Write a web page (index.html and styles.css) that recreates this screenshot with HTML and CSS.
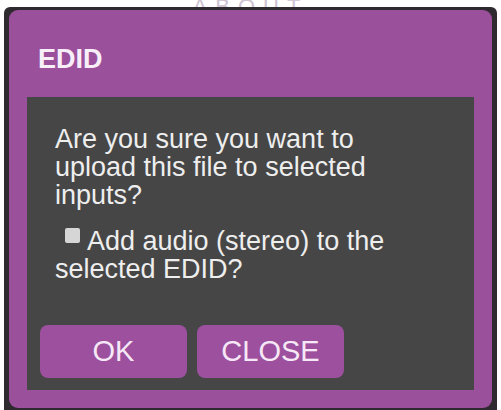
FILE: index.html
```html
<!DOCTYPE html>
<html lang="en">
<head>
    <meta charset="UTF-8">
    <title>EDID</title>
    <link rel="stylesheet" href="styles.css">
</head>
<body>
    <div class="page-title"><span>ABOUT</span></div>
    <div class="frame">
        <div class="dialog">
            <h2 class="dialog-title">EDID</h2>
            <div class="dialog-body">
                <p class="question">Are you sure you want to upload this file to selected inputs?</p>
                <label class="option">
                    <span class="check"></span>Add audio (stereo) to the selected EDID?
                </label>
                <div class="actions">
                    <button type="button" class="btn">OK</button>
                    <button type="button" class="btn">CLOSE</button>
                </div>
            </div>
        </div>
    </div>
</body>
</html>
```

FILE: styles.css
```css
body {
    margin: 0;
    padding: 0;
    background-color: #ffffff;
    font-family: "Liberation Sans", Arial, sans-serif;
    overflow: hidden;
}

.page-title {
    height: 7px;
    overflow: hidden;
    text-align: center;
}

.page-title span {
    display: inline-block;
    margin-top: -15px;
    font-size: 22px;
    letter-spacing: 8px;
    color: #cdc3d3;
}

.frame {
    margin: 0 4px;
    padding: 3px 5px 0 5px;
    background-color: #2f2a30;
    border-radius: 6px 6px 0 0;
    height: 410px;
}

.dialog {
    background-color: #9b509b;
    border-radius: 9px;
    padding: 0 18px 18px 18px;
}

.dialog-title {
    margin: 0;
    height: 87px;
    padding: 34px 0 0 11px;
    box-sizing: border-box;
    font-size: 27px;
    line-height: 30px;
    font-weight: bold;
    color: #f8eef8;
}

.dialog-body {
    background-color: #464646;
    padding: 28px 13px 12px 13px;
}

.question {
    width: 360px;
    margin: 0 0 18px 15px;
    font-size: 27px;
    line-height: 28px;
    color: #eeeeee;
}

.option {
    display: block;
    width: 360px;
    margin: 0 0 0 15px;
    font-size: 27px;
    line-height: 28px;
    color: #eeeeee;
}

.check {
    display: inline-block;
    width: 15px;
    height: 15px;
    margin: 0 7px 0 10px;
    background-color: #d6d6d6;
    border-radius: 2px;
    vertical-align: 7px;
}

.actions {
    display: flex;
    gap: 10px;
    margin-top: 42px;
}

.btn {
    width: 147px;
    height: 53px;
    border: none;
    border-radius: 8px;
    background-color: #9c509e;
    color: #f6e8f6;
    font-family: "Liberation Sans", Arial, sans-serif;
    font-size: 29px;
}
```
